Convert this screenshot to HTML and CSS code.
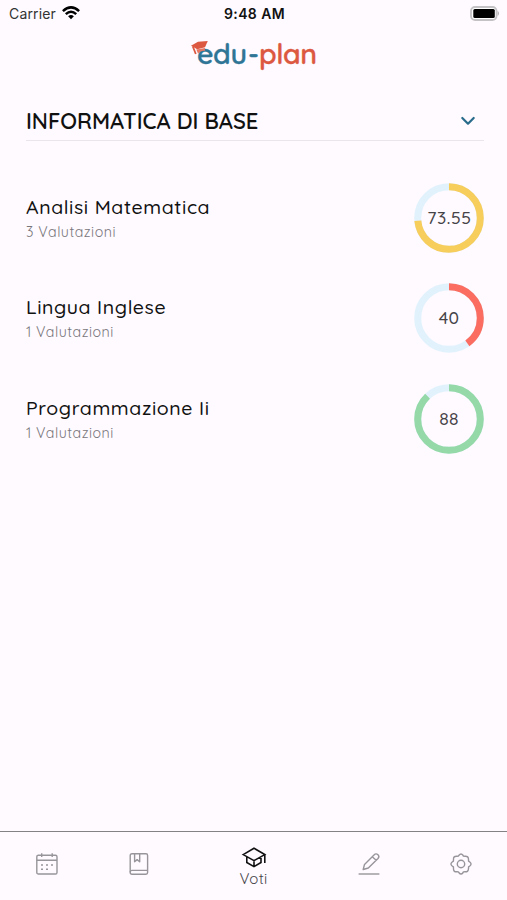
FILE: index.html
```
<!DOCTYPE html>
<html lang="it">
<head>
    <meta charset="UTF-8">
    <meta name="viewport" content="width=device-width, initial-scale=1">
    <title>edu-plan - Voti</title>
    <link rel="stylesheet" href="styles.css">
</head>
<body>
    <div class="status-bar">
        <div class="carrier">
            <span class="carrier-name">Carrier</span>
            <svg width="18" height="14" viewBox="0 0 18 14" fill="none" stroke="#000" stroke-width="2.5">
                <path d="M.9 5.1Q9-2.3 17.1 5.1"/>
                <path d="M3.8 8.1Q9 3.3 14.2 8.1"/>
                <path d="M6.1 10.3Q9 7.5 11.9 10.3L9 13.2Z" fill="#000" stroke="none"/>
            </svg>
        </div>
        <span class="clock">9:48 AM</span>
        <svg class="battery" width="30" height="15" viewBox="0 0 30 15">
            <rect x="1" y="1" width="25.5" height="13" rx="4" fill="#fff" stroke="#c5c2c5" stroke-width="1.8"/>
            <rect x="3.3" y="3.1" width="21.5" height="9" rx="1.5" fill="#000"/>
            <path d="M27.6 4.8Q30.5 7.5 27.6 10.2Z" fill="#b5b2b5"/>
        </svg>
    </div>

    <header class="logo">
        <svg width="128" height="44" viewBox="0 0 128 44">
            <text class="logo-text" y="31.5" fill="#2f7596"><tspan x="7" textLength="50">edu</tspan><tspan x="58" textLength="11" lengthAdjust="spacingAndGlyphs">-</tspan><tspan x="69" textLength="58" fill="#dc5840" stroke="#dc5840">plan</tspan></text>
            <path d="M1 13.8 8 9.8 17.8 9 15 15.2 7.2 17.2Z" fill="#dc5840"/>
            <path d="M6.3 17.6 15 15.9 14.8 19Q11 18 8 21.5Z" fill="#e67762"/>
            <path d="M2.8 14.5 5.8 22" fill="none" stroke="#dc5840" stroke-width="1.8"/>
        </svg>
    </header>

    <main>
        <div class="course-select">
            <h1>INFORMATICA DI BASE</h1>
            <svg width="14" height="9" viewBox="0 0 14 9" fill="none" stroke="#286b8b" stroke-width="2.2" stroke-linecap="round" stroke-linejoin="round">
                <path d="M1.3 2 7 7.7 12.7 2"/>
            </svg>
        </div>

        <ul class="subjects">
            <li class="subject">
                <div class="subject-info">
                    <h2>Analisi Matematica</h2>
                    <p>3 Valutazioni</p>
                </div>
                <svg class="gauge yellow" width="70" height="70" viewBox="0 0 70 70">
                    <circle class="track" cx="35" cy="35" r="31.3"/>
                    <circle class="value" cx="35" cy="35" r="31.3" pathLength="100" stroke-dasharray="73.55 100"/>
                    <text x="35.3" y="41.2" textLength="44">73.55</text>
                </svg>
            </li>
            <li class="subject">
                <div class="subject-info">
                    <h2>Lingua Inglese</h2>
                    <p>1 Valutazioni</p>
                </div>
                <svg class="gauge red" width="70" height="70" viewBox="0 0 70 70">
                    <circle class="track" cx="35" cy="35" r="31.3"/>
                    <circle class="value" cx="35" cy="35" r="31.3" pathLength="100" stroke-dasharray="40 100"/>
                    <text x="35" y="41.2">40</text>
                </svg>
            </li>
            <li class="subject">
                <div class="subject-info">
                    <h2>Programmazione Ii</h2>
                    <p>1 Valutazioni</p>
                </div>
                <svg class="gauge green" width="70" height="70" viewBox="0 0 70 70">
                    <circle class="track" cx="35" cy="35" r="31.3"/>
                    <circle class="value" cx="35" cy="35" r="31.3" pathLength="100" stroke-dasharray="88 100"/>
                    <text x="35" y="40.8">88</text>
                </svg>
            </li>
        </ul>
    </main>

    <nav class="tab-bar">
        <a class="tab">
            <!-- calendario -->
            <svg width="22" height="22" viewBox="0 0 22 22">
                <rect x=".8" y="2.2" width="20.2" height="18.8" rx="1.6"/>
                <path d="M.8 7.2H21M5.7.2V4M16.2.2V4"/>
                <path d="M5 12h2M10 12h2M15 12h2M5 16.3h2M10 16.3h2"/>
            </svg>
        </a>
        <a class="tab">
            <!-- registro -->
            <svg width="20" height="22" viewBox="0 0 20 22">
                <path d="M3 .8H17Q18.6.8 18.6 2.4V19.6Q18.6 21.2 17 21.2H3Q1.2 21.2 1.2 19.4V2.6Q1.2.8 3 .8Z"/>
                <path d="M1.2 19.3Q1.2 17.4 3 17.4H18.6M5.6.8V8.7L8.1 6.6 10.7 8.7V.8"/>
            </svg>
        </a>
        <a class="tab active">
            <!-- voti -->
            <svg width="24" height="21" viewBox="0 0 24 21">
                <path d="M1.2 7.6 12 1.2 22.8 7.6 12 13.6ZM4.8 9.8V15.5L12 19.6 19 15.5V9.8M12 13.6V19.6M22.8 7.6V16"/>
            </svg>
            <span>Voti</span>
        </a>
        <a class="tab">
            <!-- compiti -->
            <svg width="22" height="22" viewBox="0 0 22 22">
                <path d="M.6 21H21.4"/>
                <path d="M5.2 16.5 6.5 11.4 16 1.9Q18-.1 20 1.8 21.8 3.6 20 5.5L10.3 15ZM14.2 3.7 18.2 7.3"/>
            </svg>
        </a>
        <a class="tab">
            <!-- impostazioni -->
            <svg width="22" height="22" viewBox="0 0 22 22">
                <circle cx="11" cy="11" r="3.7"/>
                <path d="M9 2.2Q11-.3 13 2.2L13.4 3.1 15 3.2Q18.5 2.9 18.5 6.5L18.6 8.1 19.8 9Q22.3 11 19.8 13L18.6 13.9 18.5 15.5Q18.5 19.1 15 18.8L13.4 18.9 13 19.8Q11 22.3 9 19.8L8.4 18.9 7 18.8Q3.2 19.1 3.5 15.5L3.4 13.9 2.2 13Q-.3 11 2.2 9L3.4 8.1 3.5 6.5Q3.2 2.9 7 3.2L8.4 3.1Z"/>
            </svg>
        </a>
    </nav>
</body>
</html>
```
FILE: styles.css
```
* {
    box-sizing: border-box;
    margin: 0;
    padding: 0;
}

body {
    display: flex;
    flex-direction: column;
    height: 100vh;
    background-color: #fefaff;
    font-family: Quicksand, Lato, sans-serif;
    color: #111;
}

svg {
    display: block;
    flex: none;
    overflow: visible;
}

/* status bar */
.status-bar {
    display: grid;
    grid-template-columns: 1fr auto 1fr;
    align-items: center;
    height: 26px;
    padding: 0 7px 0 9px;
    font-family: Inter, sans-serif;
    font-size: 14px;
}

.carrier {
    display: flex;
    align-items: center;
    gap: 6px;
}

.carrier-name {
    letter-spacing: 0.15px;
    color: #333;
}

.clock {
    font-weight: 600;
    letter-spacing: 0.4px;
}

.battery {
    justify-self: end;
}

/* logo */
.logo {
    display: flex;
    justify-content: center;
    height: 74px;
    padding-top: 6px;
}

.logo-text {
    font-size: 28.5px;
    font-weight: 600;
    stroke: #2f7596;
    stroke-width: 0.3px;
}

/* content */
main {
    flex: 1;
    padding: 0 23px 0 26px;
}

.course-select {
    display: flex;
    align-items: center;
    justify-content: space-between;
    height: 41px;
    padding: 1px 9px 0 0;
    border-bottom: 1px solid #e9e6ea;
}

h1 {
    font-size: 22px;
    font-weight: 600;
    letter-spacing: 0;
}

.subjects {
    padding-top: 42px;
    list-style: none;
}

.subject {
    display: flex;
    align-items: center;
    justify-content: space-between;
    height: 70px;
    margin-bottom: 30.3px;
}

.subject-info {
    padding-top: 3px;
}

h2 {
    font-size: 19.5px;
    font-weight: 500;
    line-height: 26px;
    letter-spacing: 0.6px;
}

.subject p {
    font-size: 14.2px;
    line-height: 25px;
    letter-spacing: 0.5px;
    color: #79767b;
}

.gauge circle {
    fill: none;
    stroke-width: 7;
}

.gauge .track {
    stroke: #e1f2fd;
}

.gauge .value {
    transform: rotate(-90deg);
    transform-origin: center;
}

.gauge text {
    font-size: 17.5px;
    font-weight: 500;
    text-anchor: middle;
    letter-spacing: 0.3px;
    fill: #464347;
}

.yellow .value {
    stroke: #f7cd5b;
}

.red .value {
    stroke: #fb6d60;
}

.green .value {
    stroke: #94d9a7;
}

/* bottom tabs */
.tab-bar {
    display: grid;
    grid-template-columns: 94px 90px 1fr 92px 92px;
    height: 69px;
    border-top: 1px solid #858286;
    padding-bottom: 5px;
}

.tab {
    display: flex;
    flex-direction: column;
    align-items: center;
    justify-content: center;
}

.tab svg {
    fill: none;
    stroke: #98959a;
    stroke-width: 1.4;
    stroke-linejoin: round;
}

.tab.active {
    padding-top: 9px;
}

.active svg {
    stroke: #111;
    stroke-width: 1.6;
    stroke-linejoin: miter;
}

.active span {
    margin-top: 1px;
    font-size: 15px;
    line-height: 20px;
    letter-spacing: 0.3px;
    color: #48454a;
}
```
